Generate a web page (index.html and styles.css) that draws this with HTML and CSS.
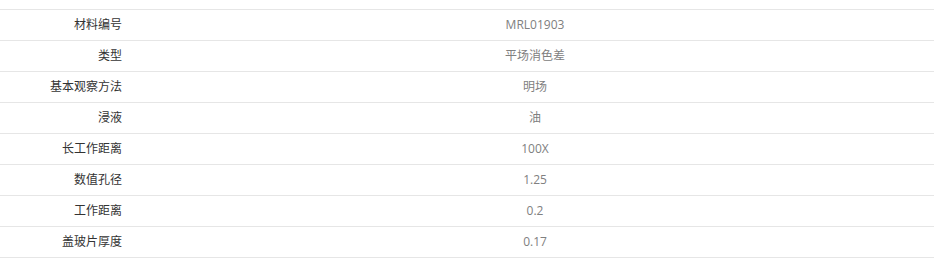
FILE: index.html
```html
<!DOCTYPE html>
<html lang="zh">
<head>
<meta charset="utf-8">
<link rel="stylesheet" href="styles.css">
</head>
<body>
<div class="wrap">
<table class="spec">
<colgroup><col class="c-label"><col></colgroup>
<tbody>
<tr><th>材料编号</th><td>MRL01903</td></tr>
<tr><th>类型</th><td>平场消色差</td></tr>
<tr><th>基本观察方法</th><td>明场</td></tr>
<tr><th>浸液</th><td>油</td></tr>
<tr><th>长工作距离</th><td>100X</td></tr>
<tr><th>数值孔径</th><td>1.25</td></tr>
<tr><th>工作距离</th><td>0.2</td></tr>
<tr><th>盖玻片厚度</th><td>0.17</td></tr>
</tbody>
</table>
</div>
</body>
</html>
```

FILE: styles.css
```css
html, body {
  margin: 0;
  padding: 0;
  background: #fff;
}
.wrap {
  padding-top: 9px;
  width: 934px;
}
.spec {
  width: 934px;
  table-layout: fixed;
  border-collapse: collapse;
  font-family: "Open Sans", "Noto Sans CJK SC", sans-serif;
  font-size: 12px;
}
.c-label {
  width: 136px;
}
.spec th, .spec td {
  height: 30px;
  padding: 0;
  border-top: 1px solid #e6e6e6;
  border-bottom: 1px solid #e6e6e6;
  vertical-align: middle;
  font-weight: normal;
  line-height: 16px;
}
.spec th {
  padding-right: 14px;
  text-align: right;
  color: #333;
}
.spec td {
  text-align: center;
  color: #808080;
}
```
